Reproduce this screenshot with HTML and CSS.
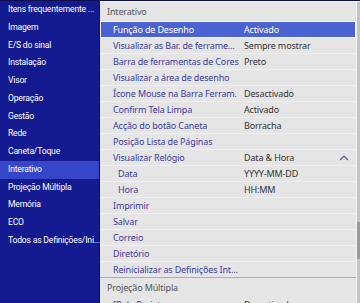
FILE: index.html
```html
<!DOCTYPE html>
<html lang="pt">
<head>
  <meta charset="UTF-8">
  <title>Interativo</title>
  <link rel="stylesheet" href="styles.css">
</head>
<body>
  <div class="screen">
    <!-- MENU PRINCIPAL -->
    <ul class="main-menu">
      <li>Itens frequentemente ...</li>
      <li>Imagem</li>
      <li>E/S do sinal</li>
      <li>Instalação</li>
      <li>Visor</li>
      <li>Operação</li>
      <li>Gestão</li>
      <li>Rede</li>
      <li>Caneta/Toque</li>
      <li class="active">Interativo</li>
      <li>Projeção Múltipla</li>
      <li>Memória</li>
      <li>ECO</li>
      <li>Todos as Definições/Ini...</li>
    </ul>

    <!-- SUBMENU -->
    <div class="sub-panel">
      <div class="sub-list">
        <div class="group-header">Interativo</div>
        <div class="row selected"><span class="label">Função de Desenho</span><span class="value">Activado</span></div>
        <div class="row"><span class="label">Visualizar as Bar. de ferrame...</span><span class="value">Sempre mostrar</span></div>
        <div class="row"><span class="label">Barra de ferramentas de Cores</span><span class="value">Preto</span></div>
        <div class="row"><span class="label">Visualizar a área de desenho</span><span class="value"></span></div>
        <div class="row"><span class="label">Ícone Mouse na Barra Ferram.</span><span class="value">Desactivado</span></div>
        <div class="row"><span class="label">Confirm Tela Limpa</span><span class="value">Activado</span></div>
        <div class="row"><span class="label">Acção do botão Caneta</span><span class="value">Borracha</span></div>
        <div class="row"><span class="label">Posição Lista de Páginas</span><span class="value"></span></div>
        <div class="row"><span class="label">Visualizar Relógio</span><span class="value">Data &amp; Hora</span>
          <svg class="caret" width="10" height="6" viewBox="0 0 10 6"><path d="M1 5 L5 1 L9 5" fill="none" stroke="#5a5ab0" stroke-width="1.2"/></svg>
        </div>
        <div class="row sub"><span class="label">Data</span><span class="value">YYYY-MM-DD</span></div>
        <div class="row sub"><span class="label">Hora</span><span class="value">HH:MM</span></div>
        <div class="row"><span class="label">Imprimir</span><span class="value"></span></div>
        <div class="row"><span class="label">Salvar</span><span class="value"></span></div>
        <div class="row"><span class="label">Correio</span><span class="value"></span></div>
        <div class="row"><span class="label">Diretório</span><span class="value"></span></div>
        <div class="row last"><span class="label">Reinicializar as Definições Int...</span><span class="value"></span></div>
        <div class="group-header second">Projeção Múltipla</div>
        <div class="row"><span class="label">IP do Projetor</span><span class="value">Desactivado</span></div>
      </div>
      <div class="scrollbar"><div class="thumb"></div></div>
    </div>
  </div>
</body>
</html>
```

FILE: styles.css
```css
body {
  margin: 0;
  padding: 0;
  background: #101573;
  font-family: "Noto Sans", "Open Sans", sans-serif;
  letter-spacing: -0.15px;
  overflow: hidden;
}

.screen {
  display: flex;
  width: 360px;
  height: 303px;
  border-top: 1px solid #0c0f4a;
  box-sizing: border-box;
}

/* MAIN MENU */
.main-menu {
  list-style: none;
  margin: 0;
  padding: 0;
  width: 99px;
  flex: none;
  background: #141a90;
  border-right: 1px solid #0e1260;
}

.main-menu li {
  height: 17.78px;
  line-height: 17.78px;
  padding-left: 8px;
  font-family: Roboto, "Noto Sans", sans-serif;
  font-size: 8.6px;
  letter-spacing: -0.2px;
  color: #fff;
  white-space: nowrap;
}

.main-menu li.active {
  background: #3546c9;
}

/* SUB PANEL */
.sub-panel {
  flex: 1;
  display: flex;
  background: #e5e5e5;
  border-top: 1px solid #f4f4f4;
  overflow: hidden;
}

.sub-list {
  flex: 1;
}

.group-header {
  height: 20px;
  line-height: 20px;
  padding-left: 7px;
  font-size: 9px;
  color: #555;
}

.group-header.second {
  height: 19px;
  line-height: 19px;
}

.row {
  display: flex;
  align-items: center;
  height: 15px;
  border-bottom: 1px solid #f0f0f0;
  font-size: 9px;
  white-space: nowrap;
}

.row .label {
  width: 131px;
  flex: none;
  padding-left: 13px;
  color: #3b3b9e;
}

.row .value {
  flex: 1;
  color: #333;
}

.row.sub .label {
  width: 126px;
  padding-left: 18px;
}

.row.selected {
  background: #4b62d3;
  outline: 1px solid #f6f6f6;
  outline-offset: -1px;
  margin-top: -1px;
  border-top: 1px solid #f6f6f6;
}

.row.selected .label,
.row.selected .value {
  color: #fff;
}

.row.last {
  border-bottom: 1px solid #a3a9e0;
}

.caret {
  margin-right: 7px;
}

/* SCROLLBAR */
.scrollbar {
  width: 3px;
  flex: none;
  background: #c4c4c4;
  border-left: 1px solid #f6f6f6;
  padding-top: 220px;
}

.thumb {
  height: 37px;
  background: #999;
}
```
